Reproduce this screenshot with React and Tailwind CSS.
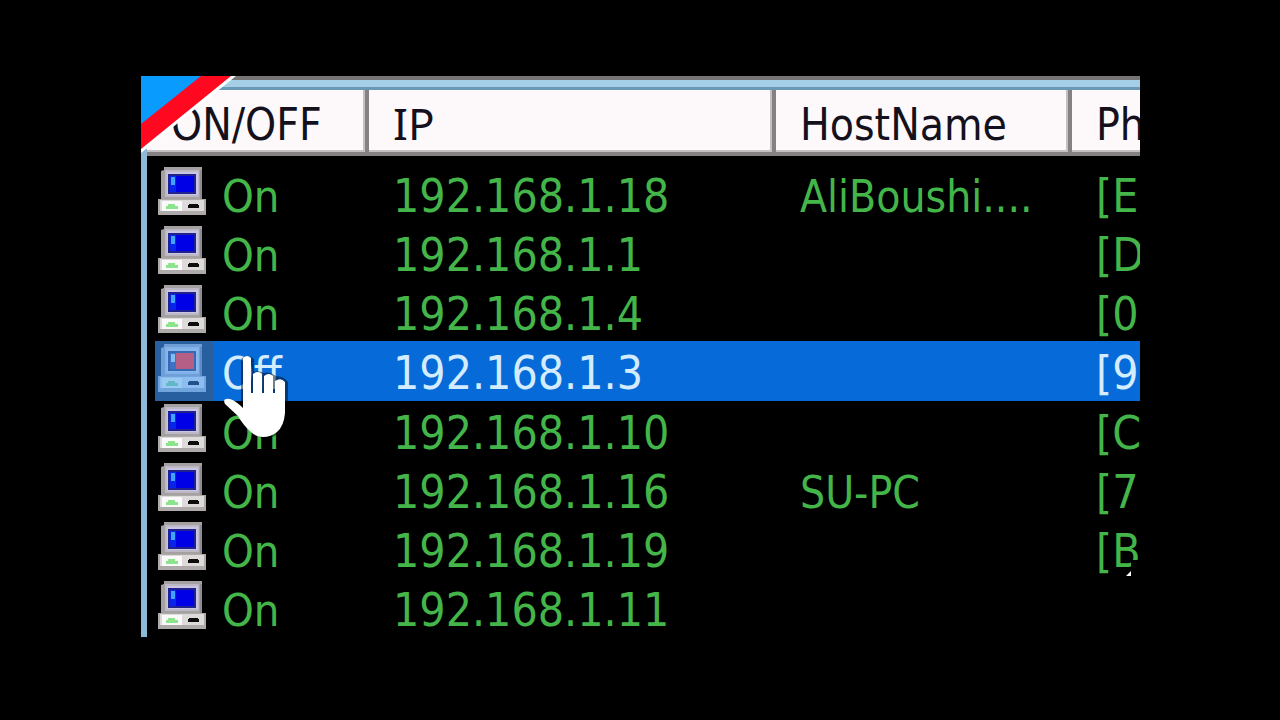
import React from 'react';

const hosts = [
  { ip: '192.168.1.18', name: 'AliBoushi....', address: '[E' },
  { ip: '192.168.1.1', name: '', address: '[D' },
  { ip: '192.168.1.4', name: '', address: '[0' },
  { ip: '192.168.1.3', name: '', address: '[9', off: true },
  { ip: '192.168.1.10', name: '', address: '[C' },
  { ip: '192.168.1.16', name: 'SU-PC', address: '[7' },
  { ip: '192.168.1.19', name: '', address: '[B' },
  { ip: '192.168.1.11', name: '', address: '' },
];

const columns = [
  { label: 'ON/OFF' },
  { label: 'IP', className: "font-['Noto_Sans'] leading-none" },
  { label: 'HostName' },
  { label: 'Ph', last: true },
];

const ComputerIcon = ({ off }) => (
  <svg viewBox="0 0 48 48" className="w-12 h-12 shrink-0" aria-hidden="true">
    {/* Monitor */}
    <path d="M6 0H44V32H3V4L6 3Z" fill={off ? '#6f9fd6' : '#a5a1a3'} />
    <path d="M7 3H41V30H7Z" fill={off ? '#82b2ea' : '#bdb8c6'} />
    <path d="M9 5H40V28H9Z" fill={off ? '#8ab8ee' : '#cbc5e4'} />
    <path d="M42 3H44V32H42Z" fill={off ? '#5b8cc5' : '#8f8b92'} />
    <path d="M10 7H38V27H10Z" fill={off ? '#3569b4' : '#22228c'} />
    <path d="M12 9H36V25H12Z" fill={off ? '#b65f86' : '#0000e6'} />
    <path d="M12 9H18V25H12Z" fill={off ? '#3f72c2' : '#0824e8'} />
    <path d="M13 10H17V18H13Z" fill={off ? '#7fc0f2' : '#3fa4fa'} />
    {/* Base */}
    <path d="M0 32H48V48H0Z" fill={off ? '#6fa4dc' : '#aeaaa9'} />
    <path d="M2 33H46V44H2Z" fill={off ? '#8dbdf0' : '#dedad9'} />
    <path d="M4 34H24V44H4Z" fill={off ? '#99caf2' : '#fafafa'} />
    <path d="M10 37H17V39H20V42H8V39H10Z" fill={off ? '#62b6c8' : '#8ce48c'} />
    <path d="M31 37H40V38H41V41H30V38H31Z" fill={off ? '#22508c' : '#0c0c0c'} />
  </svg>
);

const HandCursor = () => (
  <svg
    viewBox="0 0 70 86"
    className="absolute left-[80px] top-[278px] w-[70px] h-[86px]"
    aria-hidden="true"
  >
    <path
      d="M20 5Q26 -1 33 5V18Q38 16 43 19Q49 17 55 22Q63 22 67 28V62Q66 74 57 80Q49 86 38 83Q28 77 23 66L20 58Z"
      fill="#000000"
      opacity="0.45"
    />
    <path
      d="M22 4Q26 0 30 4V39H32V20Q37 16 41 20V39H43V22Q48 18 52 22V39H54V27Q60 23 64 28V59Q63 72 56 78Q50 83 42 83Q35 83 30 78Q22 71 17 62L4 50Q1 44 9 45Q15 47 22 54Z"
      fill="#ffffff"
    />
  </svg>
);

const App = () => {
  return (
    <main className="min-h-screen bg-black pt-[76px] pl-[141px] pr-[140px]">
      <div className="relative overflow-hidden">
        {/* Window edge */}
        <div className="h-1 bg-[#777475]" />
        <div className="h-[7px] bg-[#a5cfe6]" />
        <div className="h-[3px] bg-[#6c98b8]" />

        <div className="border-l-[6px] border-[#8fb9d8]">
          <table className="w-full table-fixed border-collapse text-left whitespace-nowrap font-['DejaVu_Sans_Condensed','DejaVu_Sans',sans-serif]">
            <colgroup>
              <col className="w-[222px]" />
              <col className="w-[407px]" />
              <col className="w-[296px]" />
              <col />
            </colgroup>
            <thead className="text-[44px] leading-[60px] text-[#14101c]">
              <tr>
                {columns.map((column) => (
                  <th key={column.label} scope="col" className="p-0 font-normal overflow-hidden">
                    <div
                      className={
                        column.last
                          ? 'h-[66px] pt-[5px] pl-6 bg-[#fdf9fb] border-b-4 border-[#858183] shadow-[inset_0_-2px_0_#c4c0c2]'
                          : 'h-[66px] pt-[5px] pl-6 bg-[#fdf9fb] border-r-4 border-b-4 border-[#858183] shadow-[inset_-2px_-2px_0_#c4c0c2]'
                      }
                    >
                      <span className={column.className}>{column.label}</span>
                    </div>
                  </th>
                ))}
              </tr>
            </thead>
            <tbody className="text-[45px] leading-[59px] text-[#43b549]">
              <tr className="h-2" />
              {hosts.map((host) => (
                <tr key={host.ip} className={host.off ? 'text-[#d4ecff]' : ''}>
                  <td className="p-0 pl-2">
                    <div className={host.off ? 'flex h-[60px] bg-[#066bd8]' : 'flex h-[59px]'}>
                      <div className={host.off ? 'w-[58px] pl-[3px] pt-[3px] bg-[#285f9f]' : 'w-[58px] pl-[3px] pt-[3px]'}>
                        <ComputerIcon off={host.off} />
                      </div>
                      <span className="pl-[9px] pt-[3px]">{host.off ? 'Off' : 'On'}</span>
                    </div>
                  </td>
                  <td className="p-0 overflow-hidden text-[46px]">
                    <div className={host.off ? 'h-[60px] pl-6 pt-[3px] bg-[#066bd8]' : 'h-[59px] pl-6 pt-[3px]'}>
                      {host.ip}
                    </div>
                  </td>
                  <td className="p-0 overflow-hidden text-[44px]">
                    <div className={host.off ? 'h-[60px] pl-6 pt-[3px] bg-[#066bd8]' : 'h-[59px] pl-6 pt-[3px]'}>
                      {host.name}
                    </div>
                  </td>
                  <td className="p-0 overflow-hidden text-[46px]">
                    <div className={host.off ? 'h-[60px] pl-6 pt-[3px] bg-[#066bd8]' : 'h-[59px] pl-6 pt-[3px]'}>
                      {host.address}
                    </div>
                  </td>
                </tr>
              ))}
            </tbody>
          </table>
        </div>

        {/* Corner ribbon */}
        <svg viewBox="0 0 96 78" className="absolute left-0 top-0 w-24 h-[78px]" aria-hidden="true">
          <path d="M0 0H95L0 77Z" fill="#ffffff" />
          <path d="M0 0H90L0 73Z" fill="#ff0820" />
          <path d="M0 0H60L0 48Z" fill="#0a9bff" />
        </svg>

        <HandCursor />

        {/* Notch at the lower right */}
        <svg viewBox="0 0 14 16" className="absolute right-0 top-[484px] w-[14px] h-4" aria-hidden="true">
          <path d="M5 0H14V16H5Z" fill="#000000" />
          <path d="M5 11V16H0Z" fill="#ffffff" />
        </svg>
      </div>
    </main>
  );
};

export default App;
